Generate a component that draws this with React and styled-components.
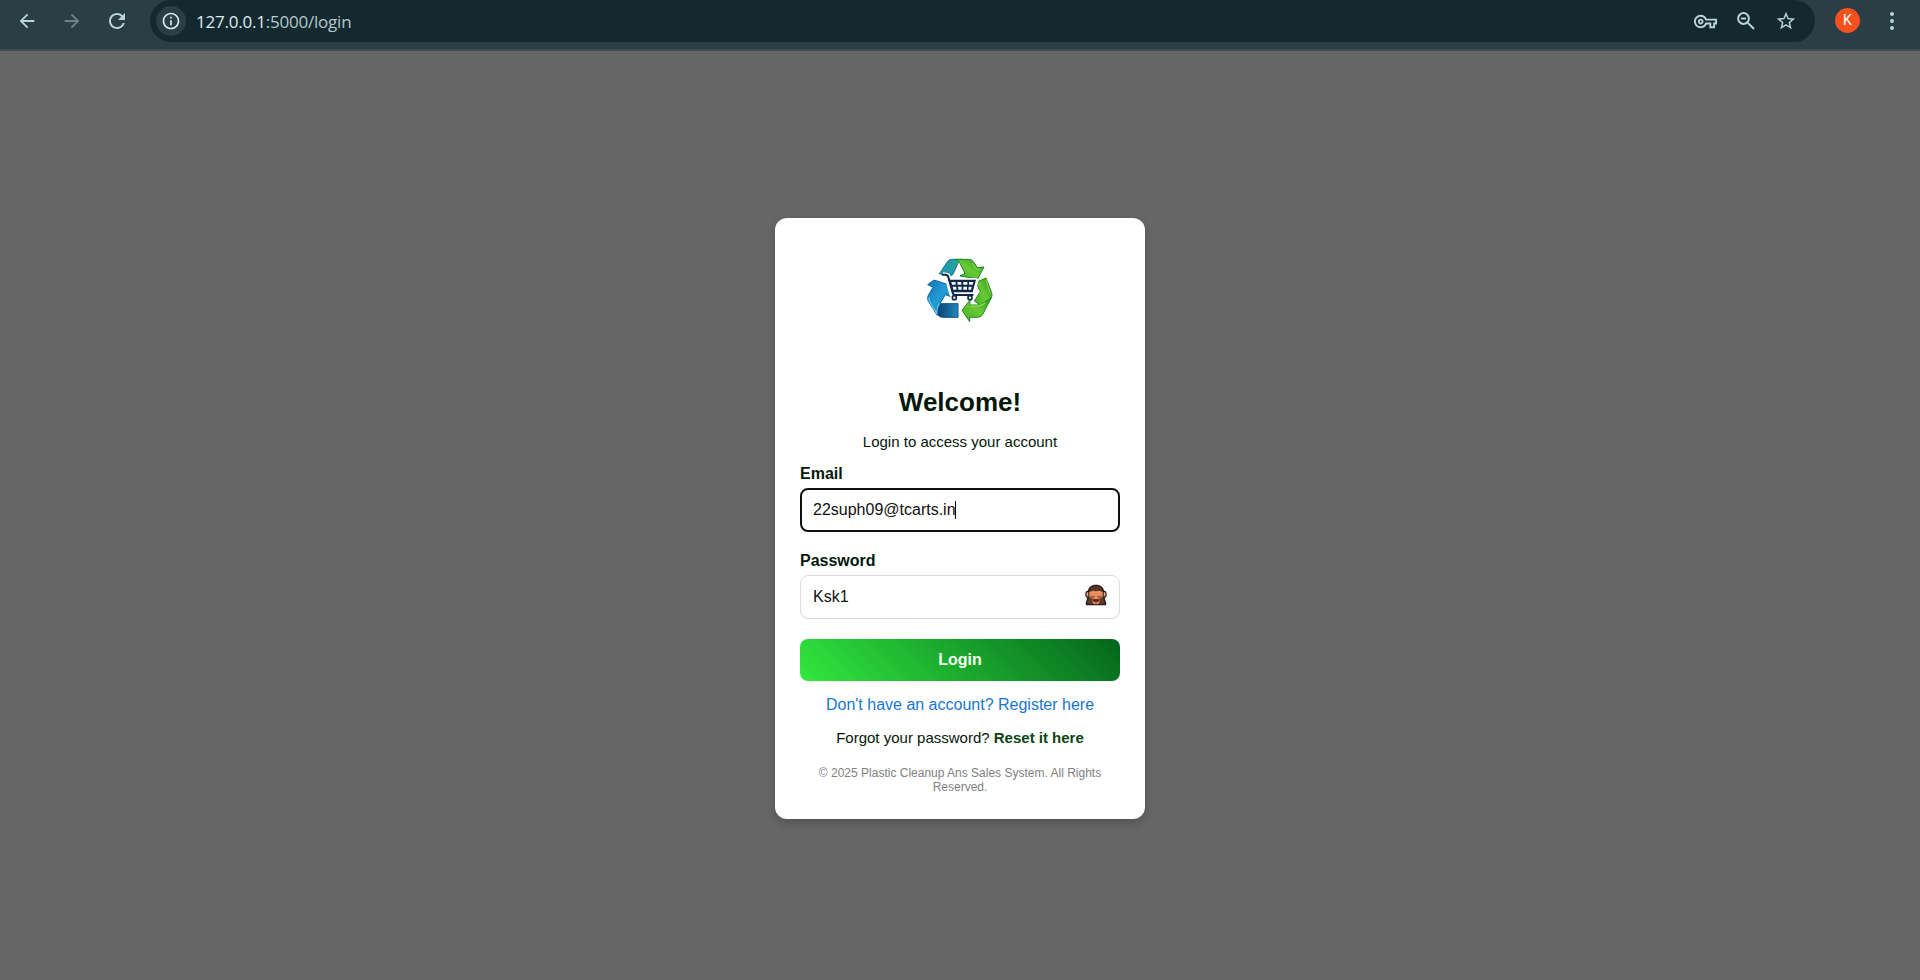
import React from "react";
import styled, { createGlobalStyle } from "styled-components";
import { MdArrowBack, MdArrowForward, MdRefresh, MdInfoOutline, MdOutlineVpnKey, MdStarOutline } from "react-icons/md";

const GlobalStyle = createGlobalStyle`
  * { box-sizing: border-box; }
  body {
    margin: 0;
    background: #666;
    font-family: "Liberation Sans", Arial, sans-serif;
    overflow: hidden;
  }
`;

const Page = styled.div`
  height: 980px;
  display: flex;
  flex-direction: column;
`;

const Toolbar = styled.header`
  height: 51px;
  flex: none;
  display: flex;
  align-items: flex-start;
  background: #2a3e45;
  border-bottom: 2px solid #3f5055;
  color: #b9d3db;
`;

const NavButtons = styled.nav`
  width: 150px;
  height: 41px;
  padding-left: 15px;
  display: flex;
  align-items: center;
  gap: 21px;
`;

const NavIcon = styled.span`
  width: 24px;
  height: 24px;
  display: grid;
  place-items: center;
  color: ${(p) => (p.$dim ? "#6d8289" : "#b9d3db")};
  font-size: ${(p) => p.$size || 22}px;
`;

const AddressBar = styled.div`
  width: 1665px;
  height: 42px;
  padding: 0 18px 0 6px;
  display: flex;
  align-items: center;
  border-radius: 0 0 21px 21px / 0 0 21px 21px;
  border-radius: 21px;
  background: #13292f;
`;

const SiteInfo = styled.span`
  width: 30px;
  height: 30px;
  border-radius: 50%;
  display: grid;
  place-items: center;
  background: #2a3e45;
  color: #dcebf0;
  font-size: 20px;
`;

const Url = styled.span`
  flex: 1;
  margin-left: 10px;
  padding-top: 1px;
  font: 17px/24px "Open Sans", "Noto Sans", sans-serif;
  letter-spacing: -0.22px;
  color: #b5c7cc;
  b { font-weight: 400; color: #dfecef; }
`;

const BarActions = styled.span`
  display: flex;
  align-items: center;
  gap: 17px;
`;

const BarIcon = styled.span`
  width: 23px;
  height: 24px;
  display: grid;
  place-items: center;
  color: #b9d3db;
  font-size: ${(p) => p.$size || 22}px;
`;

const Avatar = styled.span`
  width: 25px;
  height: 25px;
  margin: 8px 0 0 20px;
  border-radius: 50%;
  background: #f4511e;
  color: #fff;
  font: 14px/25px Roboto, sans-serif;
  text-align: center;
`;

const MenuDots = styled.span`
  height: 41px;
  margin-left: 30px;
  display: flex;
  flex-direction: column;
  justify-content: center;
  gap: 3px;
  i { width: 4px; height: 4px; border-radius: 50%; background: #b9d3db; }
`;

const Main = styled.main`
  flex: 1;
  display: flex;
  justify-content: center;
  align-items: flex-start;
  padding-top: 167px;
`;

const Card = styled.section`
  width: 370px;
  height: 601px;
  padding: 25px;
  border-radius: 12px;
  background: #fff;
  box-shadow: 0 4px 10px rgba(0, 0, 0, 0.2);
  display: flex;
  flex-direction: column;
  text-align: center;
  color: #04180a;
`;

const LogoBox = styled.div`
  height: 144px;
  padding-top: 2px;
  svg { display: block; margin: 0 auto; }
`;

const Title = styled.h1`
  margin: 0;
  font-size: 26px;
  line-height: 30px;
`;

const Subtitle = styled.p`
  margin: 16px 0 14px;
  font-size: 15px;
  line-height: 18px;
`;

const Label = styled.label`
  text-align: left;
  font-weight: bold;
  font-size: 16px;
  line-height: 18px;
`;

const Field = styled.div`
  height: 44px;
  margin-top: 5px;
  margin-bottom: 20px;
  padding: 0 12px;
  display: flex;
  align-items: center;
  justify-content: space-between;
  border-radius: 8px;
  border: ${(p) => (p.$focus ? "2px solid #101010" : "1px solid #dcdcdc")};
  padding-left: ${(p) => (p.$focus ? 11 : 12)}px;
  color: #111;
  font-size: 16px;
  line-height: 18px;
`;

const Value = styled.span`
  display: flex;
  align-items: center;
`;

const Caret = styled.span`
  width: 1px;
  height: 18px;
  margin-left: -1px;
  background: #000;
`;

const RevealToggle = styled.span`
  height: 26px;
  line-height: 0;
`;

const LoginButton = styled.button`
  height: 42px;
  margin: 0 0 15px;
  padding: 0;
  border: 0;
  border-radius: 8px;
  background: linear-gradient(45deg, #32e83f, #04651c);
  color: #f4fff4;
  font: bold 16px/18px "Liberation Sans", Arial, sans-serif;
`;

const RegisterLink = styled.a`
  color: #1976d2;
  font-size: 16px;
  line-height: 18px;
`;

const Forgot = styled.p`
  margin: 15px 0 19px;
  font-size: 15px;
  line-height: 18px;
  a { color: #0b4512; font-weight: bold; }
`;

const Copyright = styled.footer`
  font-size: 12px;
  line-height: 14px;
  color: #808080;
`;

const ZoomOutIcon = () => (
  <svg width="18" height="18" viewBox="0 0 18 18" fill="none" stroke="currentColor" strokeWidth="2">
    <circle cx="6.5" cy="6.5" r="5.4" />
    <path d="M4 6.5h5M10.4 10.4l6.6 6.6" />
  </svg>
);

const RecycleCartLogo = () => (
  <svg width="100" height="90" viewBox="0 0 300 270">
    <defs>
      <linearGradient id="topFold" x1="0" y1="1" x2="1" y2="0">
        <stop offset="0" stopColor="#1b94bd" />
        <stop offset="1" stopColor="#2ca78d" />
      </linearGradient>
      <linearGradient id="blueArrow" x1="0" y1="0" x2="1" y2="1">
        <stop offset="0" stopColor="#0f74b8" />
        <stop offset=".5" stopColor="#249bd3" />
        <stop offset="1" stopColor="#1485c2" />
      </linearGradient>
      <linearGradient id="greenArrow" x1="0" y1="1" x2="1" y2="0">
        <stop offset="0" stopColor="#3eae27" />
        <stop offset=".5" stopColor="#69c936" />
        <stop offset="1" stopColor="#2a9a25" />
      </linearGradient>
      <linearGradient id="blueFold" x1="0" x2="1">
        <stop offset="0" stopColor="#093f70" />
        <stop offset="1" stopColor="#2388bb" />
      </linearGradient>
    </defs>
    <g strokeLinejoin="round" strokeWidth="3">
      <path d="M88 87l24-37q5-7 14-7h31l-12 9-16 36-12 8-10-9z" fill="url(#topFold)" stroke="#13778e" />
      <path d="M136 43h40q10 0 15 8l11 17 20-2-19 36-53-9 15-8-17-34q-4-7-12-8z" fill="url(#greenArrow)" stroke="#20872b" />
      <path d="M72 105l40 13 11 37-17-6-16 26-8 36-27-42q-5-9 0-18l14-24-16-8z" fill="url(#blueArrow)" stroke="#0b68a3" />
      <path d="M88 176h56v41H98q-11 0-16-10-5-18 6-31z" fill="url(#blueFold)" stroke="#0a527f" />
      <path d="M59 157q-5 8 2 17l20 32q-2-17 8-31" fill="none" stroke="#55c4ec" strokeWidth="4" />
      <path d="M198 112l30-13 17 44q3 8-1 15l-21 31-30-21 18-28z" fill="url(#greenArrow)" stroke="#248923" />
      <path d="M244 158l-25 49q-5 10-16 10h-24v13l-23-34 24-31v15h21q15 0 24-9z" fill="url(#greenArrow)" stroke="#278f20" />
      <path d="M181 184l21-1q14-1 24-10" fill="none" stroke="#8bd94c" strokeWidth="4" />
      <path d="M187 55l13 19 12-1M228 104l13 42" fill="none" stroke="#8bd94c" strokeWidth="3" />
    </g>
    <path d="M98 91l14 2 15 55h61M119 108h77l-8 30h-59" fill="none" stroke="#fff" strokeWidth="18" strokeLinejoin="round" />
    <path d="M115 104h83l-10 38h-62z" fill="#10264a" />
    <path d="M124 111h13v8h-11zM142 111h12v8h-11zM160 111h12v8h-12zM177 111h13l-2 8h-11zM128 125h11v9h-9zM144 125h11v9h-10zM160 125h11v9h-11zM176 125h9l-2 9h-8z" fill="#f5faff" />
    <path d="M98 89h8q7 0 9 7l13 47q2 7 8 7h52" fill="none" stroke="#10264a" strokeWidth="6" strokeLinecap="round" strokeLinejoin="round" />
    <g fill="#fff" stroke="#10264a" strokeWidth="5">
      <circle cx="133" cy="158" r="6" />
      <circle cx="180" cy="158" r="6" />
    </g>
  </svg>
);

const MonkeyIcon = () => (
  <svg width="22" height="22" viewBox="0 0 66 66">
    <path d="M33 2C19 2 11 9 9 20 2 20 1 26 1 32c0 5 2 8 6 9-1 6-4 11-5 18 0 3 2 5 5 5h52c3 0 5-2 5-5-1-7-4-12-5-18 4-1 6-4 6-9 0-6-1-12-8-12C55 9 47 2 33 2z" fill="#17120f" />
    <path d="M33 5c-13 0-21 8-21 19v15h42V24C54 13 46 5 33 5z" fill="#563526" />
    <path d="M10 23q-6 0-6 8t6 8zM56 23q6 0 6 8t-6 8z" fill="#e8a57c" />
    <path d="M13 25q8-8 20-3 12-5 20 3v19q-2 17-20 17T13 44z" fill="#ec8d5c" />
    <path d="M12 40l11 3q-2 12 3 18H6q0-10 6-21zM54 40l-11 3q2 12-3 18h20q0-10-6-21z" fill="#5a3a2b" />
    <path d="M14 35l14 2-4 7-11-2zM52 35l-14 2 4 7 11-2z" fill="#a85f3d" />
    <path d="M25 38h5M36 38h5" stroke="#8c4c30" strokeWidth="3" />
    <path d="M24 46h18q-1 10-9 10t-9-10z" fill="#3a0e0e" />
    <path d="M28 52q5-3 10 0-5 5-10 0z" fill="#e53e43" />
  </svg>
);

export default function App() {
  return (
    <Page>
      <GlobalStyle />
      <Toolbar>
        <NavButtons>
          <NavIcon><MdArrowBack /></NavIcon>
          <NavIcon $dim><MdArrowForward /></NavIcon>
          <NavIcon $size={24}><MdRefresh /></NavIcon>
        </NavButtons>
        <AddressBar>
          <SiteInfo><MdInfoOutline /></SiteInfo>
          <Url><b>127.0.0.1</b>:5000/login</Url>
          <BarActions>
            <BarIcon $size={23}><MdOutlineVpnKey /></BarIcon>
            <BarIcon><ZoomOutIcon /></BarIcon>
            <BarIcon><MdStarOutline /></BarIcon>
          </BarActions>
        </AddressBar>
        <Avatar>K</Avatar>
        <MenuDots><i /><i /><i /></MenuDots>
      </Toolbar>
      <Main>
        <Card>
          <LogoBox><RecycleCartLogo /></LogoBox>
          <Title>Welcome!</Title>
          <Subtitle>Login to access your account</Subtitle>
          <Label>Email</Label>
          <Field $focus><Value>22suph09@tcarts.in<Caret /></Value></Field>
          <Label>Password</Label>
          <Field><Value>Ksk1</Value><RevealToggle><MonkeyIcon /></RevealToggle></Field>
          <LoginButton>Login</LoginButton>
          <RegisterLink>Don't have an account? Register here</RegisterLink>
          <Forgot>Forgot your password? <a>Reset it here</a></Forgot>
          <Copyright>© 2025 Plastic Cleanup Ans Sales System. All Rights Reserved.</Copyright>
        </Card>
      </Main>
    </Page>
  );
}
